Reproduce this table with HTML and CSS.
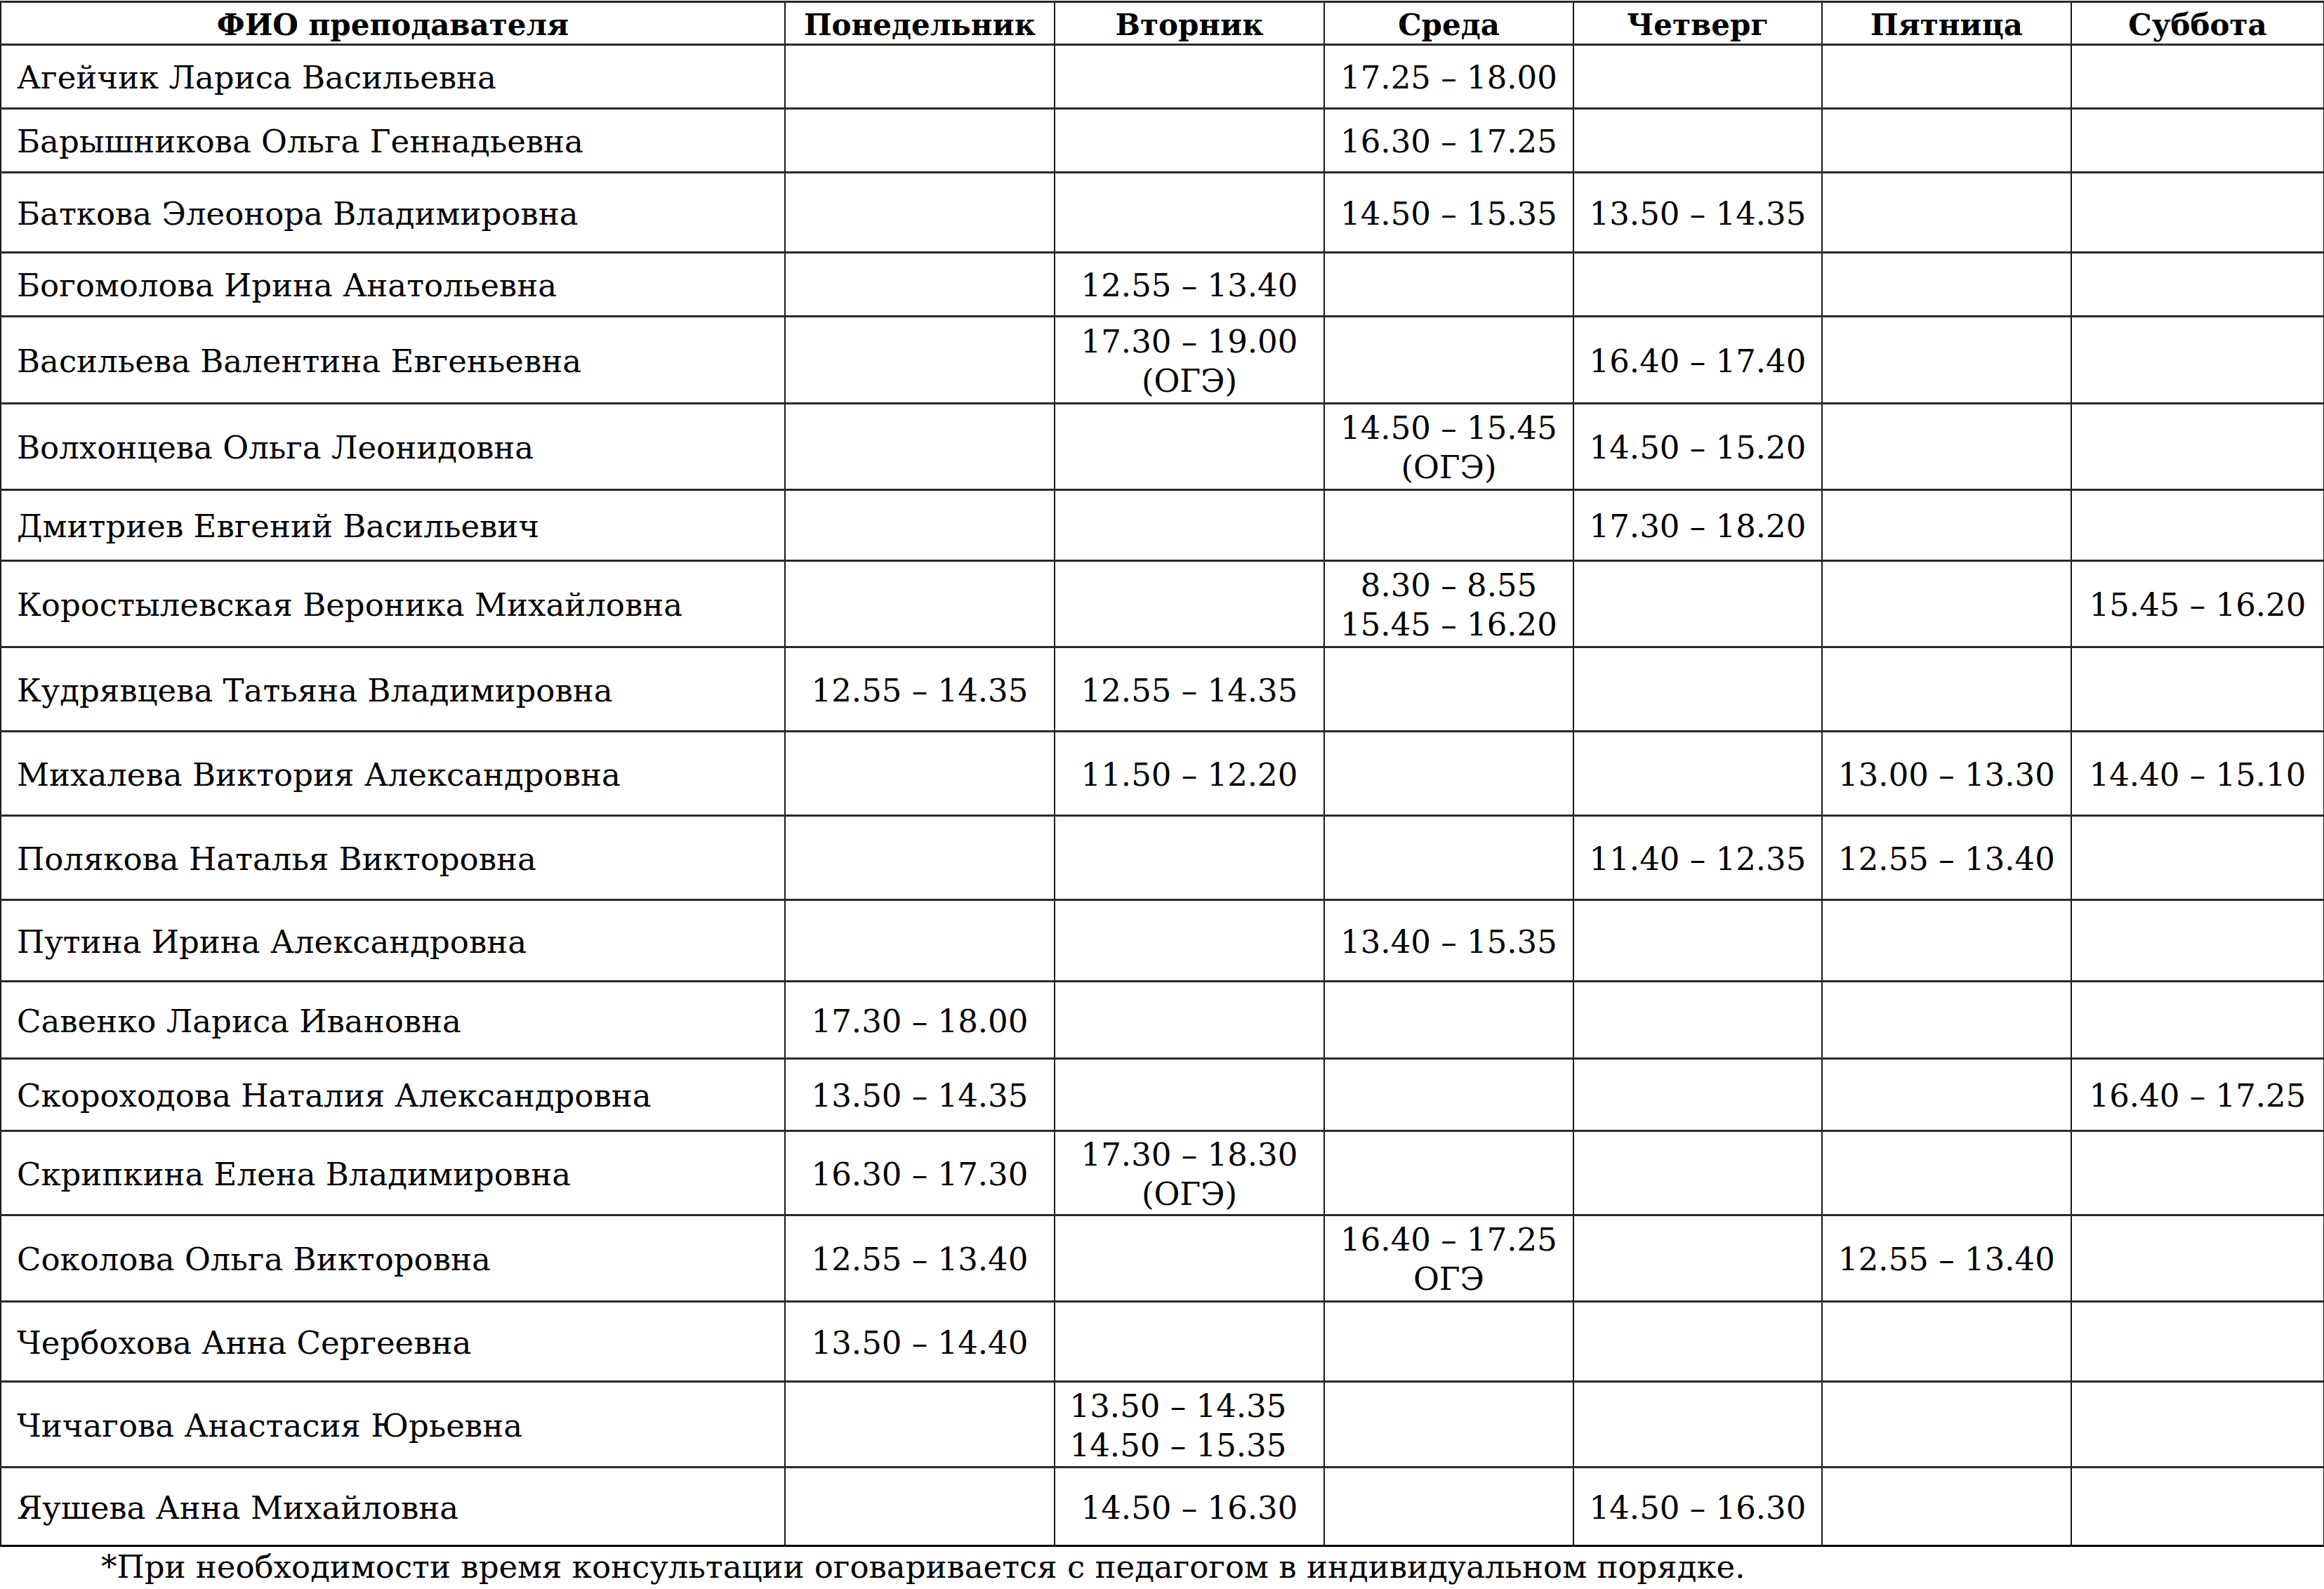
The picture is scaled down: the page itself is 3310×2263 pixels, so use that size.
FILE: index.html
```html
<!DOCTYPE html>
<html lang="ru">
<head>
<meta charset="utf-8">
<title>График консультаций</title>
<link rel="stylesheet" href="styles.css">
</head>
<body>
<table class="sched">
  <colgroup>
    <col class="c-name"><col class="c-mon"><col class="c-tue"><col class="c-wed"><col class="c-thu"><col class="c-fri"><col class="c-sat">
  </colgroup>
  <thead>
    <tr class="h61"><th>ФИО преподавателя</th><th>Понедельник</th><th>Вторник</th><th>Среда</th><th>Четверг</th><th>Пятница</th><th>Суббота</th></tr>
  </thead>
  <tbody>
    <tr class="h91"><td class="name">Агейчик Лариса Васильевна</td><td></td><td></td><td>17.25 – 18.00</td><td></td><td></td><td></td></tr>
    <tr class="h91"><td class="name">Барышникова Ольга Геннадьевна</td><td></td><td></td><td>16.30 – 17.25</td><td></td><td></td><td></td></tr>
    <tr class="h114"><td class="name">Баткова Элеонора Владимировна</td><td></td><td></td><td>14.50 – 15.35</td><td>13.50 – 14.35</td><td></td><td></td></tr>
    <tr class="h91"><td class="name">Богомолова Ирина Анатольевна</td><td></td><td>12.55 – 13.40</td><td></td><td></td><td></td><td></td></tr>
    <tr class="h124"><td class="name">Васильева Валентина Евгеньевна</td><td></td><td>17.30 – 19.00<br>(ОГЭ)</td><td></td><td>16.40 – 17.40</td><td></td><td></td></tr>
    <tr class="h123"><td class="name">Волхонцева Ольга Леонидовна</td><td></td><td></td><td>14.50 – 15.45<br>(ОГЭ)</td><td>14.50 – 15.20</td><td></td><td></td></tr>
    <tr class="h101"><td class="name">Дмитриев Евгений Васильевич</td><td></td><td></td><td></td><td>17.30 – 18.20</td><td></td><td></td></tr>
    <tr class="h123"><td class="name">Коростылевская Вероника Михайловна</td><td></td><td></td><td>8.30 – 8.55<br>15.45 – 16.20</td><td></td><td></td><td>15.45 – 16.20</td></tr>
    <tr class="h120"><td class="name">Кудрявцева Татьяна Владимировна</td><td>12.55 – 14.35</td><td>12.55 – 14.35</td><td></td><td></td><td></td><td></td></tr>
    <tr class="h120"><td class="name">Михалева Виктория Александровна</td><td></td><td>11.50 – 12.20</td><td></td><td></td><td>13.00 – 13.30</td><td>14.40 – 15.10</td></tr>
    <tr class="h120"><td class="name">Полякова Наталья Викторовна</td><td></td><td></td><td></td><td>11.40 – 12.35</td><td>12.55 – 13.40</td><td></td></tr>
    <tr class="h116"><td class="name">Путина Ирина Александровна</td><td></td><td></td><td>13.40 – 15.35</td><td></td><td></td><td></td></tr>
    <tr class="h110"><td class="name">Савенко Лариса Ивановна</td><td>17.30 – 18.00</td><td></td><td></td><td></td><td></td><td></td></tr>
    <tr class="h103"><td class="name">Скороходова Наталия Александровна</td><td>13.50 – 14.35</td><td></td><td></td><td></td><td></td><td>16.40 – 17.25</td></tr>
    <tr class="h120"><td class="name">Скрипкина Елена Владимировна</td><td>16.30 – 17.30</td><td>17.30 – 18.30<br>(ОГЭ)</td><td></td><td></td><td></td><td></td></tr>
    <tr class="h123"><td class="name">Соколова Ольга Викторовна</td><td>12.55 – 13.40</td><td></td><td>16.40 – 17.25<br>ОГЭ</td><td></td><td>12.55 – 13.40</td><td></td></tr>
    <tr class="h114"><td class="name">Чербохова Анна Сергеевна</td><td>13.50 – 14.40</td><td></td><td></td><td></td><td></td><td></td></tr>
    <tr class="h122"><td class="name">Чичагова Анастасия Юрьевна</td><td></td><td class="nudge">13.50 – 14.35<br>14.50 – 15.35</td><td></td><td></td><td></td><td></td></tr>
    <tr class="h112 last"><td class="name">Яушева Анна Михайловна</td><td></td><td>14.50 – 16.30</td><td></td><td>14.50 – 16.30</td><td></td><td></td></tr>
  </tbody>
</table>
<p class="note">*При необходимости время консультации оговаривается с педагогом в индивидуальном порядке.</p>
</body>
</html>
```

FILE: styles.css
```css
html, body {
  margin: 0;
  padding: 0;
  background: #ffffff;
  color: #000000;
}

body {
  font-family: "DejaVu Serif", "Liberation Serif", serif;
  font-size: 45px;
  padding-top: 1px;
}

.sched {
  width: 3309px;
  border-collapse: collapse;
  table-layout: fixed;
}

.c-name { width: 1117px; }
.c-mon { width: 384px; }
.c-tue { width: 384px; }
.c-wed { width: 355px; }
.c-thu { width: 354px; }
.c-fri { width: 355px; }
.c-sat { width: 360px; }

.sched th,
.sched td {
  border: 2px solid #1a1a1a;
  padding: 4px 0 0 0;
  text-align: center;
  vertical-align: middle;
  line-height: 56px;
  font-weight: normal;
}

.sched tr {
  border-top: 3px solid #2a2a2a;
}

.sched th {
  font-weight: bold;
  font-size: 42px;
  line-height: 50px;
  padding-top: 6px;
}

.sched td.name {
  text-align: left;
  padding-left: 22px;
}

.sched td.nudge {
  padding-right: 32px;
}

.sched tr.last td {
  border-bottom: 3px solid #000;
}

.h61 { height: 61px; }
.h91 { height: 91px; }
.h101 { height: 101px; }
.h103 { height: 103px; }
.h110 { height: 110px; }
.h112 { height: 112px; }
.h114 { height: 114px; }
.h116 { height: 116px; }
.h120 { height: 120px; }
.h122 { height: 122px; }
.h123 { height: 123px; }
.h124 { height: 124px; }

.note {
  margin: 0;
  padding-left: 144px;
  line-height: 58px;
}
```
